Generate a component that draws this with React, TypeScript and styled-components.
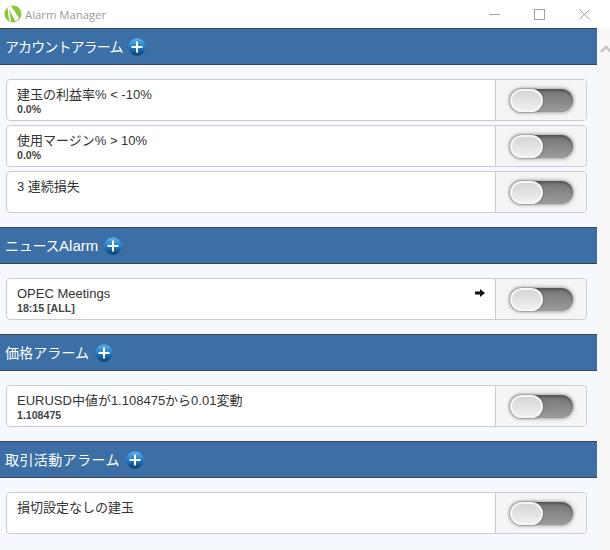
import styled, { createGlobalStyle } from "styled-components";

const GlobalStyle = createGlobalStyle`
  html, body {
    margin: 0;
    padding: 0;
    width: 610px;
    height: 550px;
    overflow: hidden;
    background: #ffffff;
    font-family: "Liberation Sans", "Noto Sans CJK JP", sans-serif;
  }
`;

const Window = styled.div`
  width: 610px;
  height: 550px;
  display: flex;
  flex-direction: column;
`;

const TitleBar = styled.div`
  height: 28px;
  flex: none;
  display: flex;
  align-items: center;
  padding: 0 3px 0 4px;
  background: #ffffff;
`;

const AppTitle = styled.span`
  font-family: "Open Sans", "Liberation Sans", sans-serif;
  font-size: 11.3px;
  color: #9a9a9a;
  flex: 1;
  margin-left: 3px;
`;

const WindowButton = styled.div`
  width: 45px;
  height: 28px;
  display: flex;
  align-items: center;
  justify-content: center;
`;

const Body = styled.div`
  flex: 1;
  display: flex;
  min-height: 0;
`;

const Content = styled.div`
  width: 597px;
  background: #f5f9fd;
  flex: none;
`;

const ScrollTrack = styled.div`
  flex: 1;
  min-width: 0;
  overflow: hidden;
  background: #f8f8f8;
  display: flex;
  padding: 17px 0 0 3px;
  align-items: flex-start;
`;

const SectionHeader = styled.div`
  height: 35px;
  display: flex;
  align-items: center;
  padding-left: 5px;
  gap: 6px;
  background: #3b6fa6;
  border-top: 1px solid #40454c;
  border-bottom: 1px solid #40454c;
  color: #ffffff;
`;

const SectionTitle = styled.span<{ $tracking: number }>`
  font-size: 14px;
  letter-spacing: ${(p) => p.$tracking}px;
  margin-top: -2px;
`;

const AlarmWord = styled.span`
  font-size: 15px;
  letter-spacing: 0;
`;

const RowList = styled.div`
  display: flex;
  flex-direction: column;
  gap: 4px;
  padding: 14px 10px 14px 6px;
`;

const Row = styled.div`
  height: 40px;
  display: flex;
  background: #ffffff;
  border: 1px solid #cccccc;
  border-radius: 4px;
  overflow: hidden;
`;

const RowText = styled.div`
  flex: 1;
  position: relative;
  padding: 7px 10px 0;
  color: #333333;
`;

const RowTitle = styled.div`
  font-size: 13px;
  line-height: 16px;
`;

const RowSub = styled.div`
  font-size: 10.6px;
  font-weight: bold;
  line-height: 12px;
  color: #444444;
`;

const Arrow = styled.svg`
  position: absolute;
  right: 10px;
  top: 9px;
`;

const ToggleCell = styled.div`
  width: 90px;
  flex: none;
  border-left: 1px solid #cccccc;
  background: #f5f5f5;
  display: flex;
  align-items: center;
  justify-content: center;
`;

const Toggle = styled.div`
  width: 63px;
  height: 23px;
  border-radius: 12px;
  position: relative;
  margin-left: 1px;
  background: linear-gradient(#747474, #9c9c9c);
  box-shadow: 0 0 4px rgba(0, 0, 0, 0.5), inset 0 2px 3px rgba(0, 0, 0, 0.3);
`;

const Knob = styled.div`
  position: absolute;
  left: 0;
  top: 0;
  width: 33px;
  height: 23px;
  box-sizing: border-box;
  border-radius: 12px;
  border: 2px solid #f6f6f6;
  background: linear-gradient(#d6d6d6, #efefef);
  box-shadow: 0 0 2px rgba(0, 0, 0, 0.55);
`;

const Logo = () => (
  <svg width="18" height="18" viewBox="0 0 18 18">
    <circle cx="9" cy="9" r="8.5" fill="#8cc63f" />
    <path d="M4 2 L7 1 L15 13 L13 15.5 L11.5 16.5 Z" fill="#ffffff" />
    <path d="M3.6 3 L5 2.4 L7 16.6 L5.2 16 Z" fill="#ffffff" />
  </svg>
);

const PlusIcon = ({ id }: { id: string }) => (
  <svg width="18" height="18" viewBox="0 0 18 18">
    <defs>
      <linearGradient id={id} x1="0" y1="0" x2="0" y2="1">
        <stop offset="0" stopColor="#5fb2e8" />
        <stop offset="0.55" stopColor="#1b78c2" />
        <stop offset="1" stopColor="#0b3f70" />
      </linearGradient>
    </defs>
    <circle cx="9" cy="9" r="8.7" fill={`url(#${id})`} />
    <path d="M9 3.5 V14.5 M3.5 9 H14.5" stroke="#ffffff" strokeWidth="2" />
  </svg>
);

type Alarm = { title: string; sub?: string; arrow?: boolean };

type Section = {
  title: string;
  word?: string;
  tracking: number;
  alarms: Alarm[];
};

const sections: Section[] = [
  {
    title: "アカウントアラーム",
    tracking: -0.9,
    alarms: [
      { title: "建玉の利益率% < -10%", sub: "0.0%" },
      { title: "使用マージン% > 10%", sub: "0.0%" },
      { title: "3 連続損失" },
    ],
  },
  {
    title: "ニュース",
    word: "Alarm",
    tracking: -0.3,
    alarms: [{ title: "OPEC Meetings", sub: "18:15 [ALL]", arrow: true }],
  },
  {
    title: "価格アラーム",
    tracking: 0.1,
    alarms: [{ title: "EURUSD中値が1.108475から0.01変動", sub: "1.108475" }],
  },
  {
    title: "取引活動アラーム",
    tracking: 0.4,
    alarms: [{ title: "損切設定なしの建玉" }],
  },
];

export default function App() {
  return (
    <Window>
      <GlobalStyle />
      <TitleBar>
        <Logo />
        <AppTitle>Alarm Manager</AppTitle>
        <WindowButton>
          <svg width="11" height="11" viewBox="0 0 11 11">
            <path d="M0 5.5 H11" stroke="#a0a0a0" />
          </svg>
        </WindowButton>
        <WindowButton>
          <svg width="11" height="11" viewBox="0 0 11 11">
            <rect x="0.5" y="0.5" width="10" height="10" fill="none" stroke="#a0a0a0" />
          </svg>
        </WindowButton>
        <WindowButton>
          <svg width="11" height="11" viewBox="0 0 11 11">
            <path d="M0.5 0.5 L10.5 10.5 M10.5 0.5 L0.5 10.5" stroke="#a0a0a0" />
          </svg>
        </WindowButton>
      </TitleBar>
      <Body>
        <Content>
          {sections.map((section, i) => (
            <div key={section.title}>
              <SectionHeader>
                <SectionTitle $tracking={section.tracking}>
                  {section.title}
                  {section.word && <AlarmWord>{section.word}</AlarmWord>}
                </SectionTitle>
                <PlusIcon id={`plus-${i}`} />
              </SectionHeader>
              <RowList>
                {section.alarms.map((alarm) => (
                  <Row key={alarm.title}>
                    <RowText>
                      <RowTitle>{alarm.title}</RowTitle>
                      {alarm.sub && <RowSub>{alarm.sub}</RowSub>}
                      {alarm.arrow && (
                        <Arrow width="10" height="10" viewBox="0 0 10 10">
                          <path d="M0 3.5 H5 V1 L10 5 L5 9 V6.5 H0 Z" fill="#111111" />
                        </Arrow>
                      )}
                    </RowText>
                    <ToggleCell>
                      <Toggle>
                        <Knob />
                      </Toggle>
                    </ToggleCell>
                  </Row>
                ))}
              </RowList>
            </div>
          ))}
        </Content>
        <ScrollTrack>
          <svg width="12" height="8" viewBox="0 0 12 8" style={{ flex: "none" }}>
            <path d="M1 7 L6 2 L11 7" fill="none" stroke="#c4c4c4" strokeWidth="2.4" />
          </svg>
        </ScrollTrack>
      </Body>
    </Window>
  );
}
